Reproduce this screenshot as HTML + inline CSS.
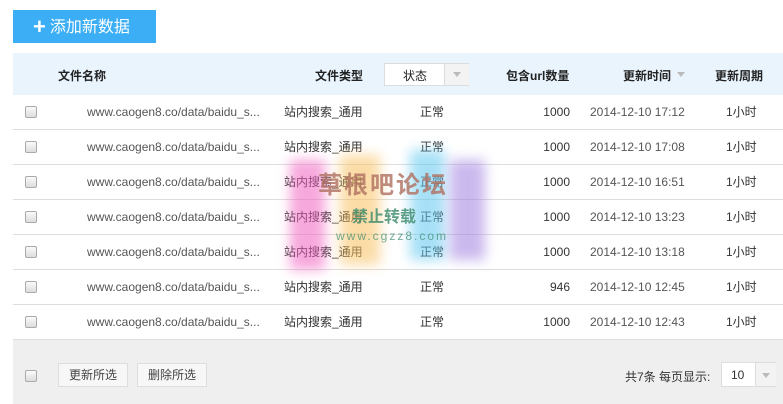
<!DOCTYPE html><html><head><meta charset="utf-8"><style>
*{margin:0;padding:0;box-sizing:border-box}
body{width:783px;height:404px;background:#fff;font-family:"Liberation Sans","Noto Sans CJK SC",sans-serif;font-size:12px;color:#333;position:relative;overflow:hidden}
.abs{position:absolute}
.btn{left:13px;top:10px;width:143px;height:33px;background:#3caef6;color:#fff;font-size:16px;line-height:33px;padding-left:20px}
.btn b{font-size:22px;font-weight:bold;vertical-align:-2px;margin-right:4px}
.hdr{left:13px;top:53px;width:770px;height:42px;background:#eaf4fd;font-weight:bold;font-size:12px;color:#222}
.hdr>span{position:absolute;top:14px}
.row{left:13px;width:770px;height:35px;border-bottom:1px solid #ddd;line-height:34px}
.row span{position:absolute;top:0}
.cb{width:12px;height:12px;border:1px solid #aaa;border-radius:2px;background:linear-gradient(#fafafa,#ddd);position:absolute}
.foot{left:13px;top:340px;width:770px;height:64px;background:#efefef}
.fb{position:absolute;top:23px;height:24px;border:1px solid #ddd;background:#f7f7f7;line-height:22px;text-align:center;color:#444}
.sel{position:absolute;background:#fff;border:1px solid #ddd}
.arr{position:absolute;width:0;height:0;border-left:4px solid transparent;border-right:4px solid transparent;border-top:5px solid #bbb}
.wm{position:absolute;filter:blur(6px);opacity:.55}
</style></head><body>
<div class="abs btn"><b>+</b>添加新数据</div>
<div class="abs hdr">
<span style="left:45px">文件名称</span>
<span style="left:302px">文件类型</span>
<div class="sel" style="left:371px;top:10px;width:85px;height:23px;font-weight:normal"><div style="position:absolute;left:18px;top:3px">状态</div><div style="position:absolute;left:59px;top:0;width:25px;height:21px;background:#f3f3f3;border-left:1px solid #ddd"></div><div class="arr" style="left:68px;top:8px"></div></div>
<span style="left:493px">包含url数量</span>
<span style="left:610px">更新时间</span><div class="arr" style="left:664px;top:19px"></div>
<span style="left:702px">更新周期</span>
</div>
<div id="rows"></div>
<script>
var d=[["17:12","1000"],["17:08","1000"],["16:51","1000"],["13:23","1000"],["13:18","1000"],["12:45","946"],["12:43","1000"]];
var h="";d.forEach(function(r,i){h+='<div class="abs row" style="top:'+(95+i*35)+'px"><div class="cb" style="left:12px;top:11px"></div><span style="left:74px;color:#555">www.caogen8.co/data/baidu_s...</span><span style="left:271px">站内搜索_通用</span><span style="left:407px">正常</span><span style="right:213px">'+r[1]+'</span><span style="left:577px;color:#555">2014-12-10 '+r[0]+'</span><span style="left:713px">1小时</span></div>'});
document.getElementById("rows").innerHTML=h;
</script>
<div class="wm" style="left:290px;top:160px;width:35px;height:110px;background:#f060c0"></div>
<div class="wm" style="left:340px;top:155px;width:40px;height:110px;background:#f8c060"></div>
<div class="wm" style="left:410px;top:150px;width:35px;height:110px;background:#60c8f0"></div>
<div class="wm" style="left:450px;top:160px;width:35px;height:100px;background:#a080e0"></div>
<div class="abs" style="left:318px;top:165px;font-size:24px;font-weight:bold;color:#b07060;opacity:.8;letter-spacing:2px">草根吧论坛</div>
<div class="abs" style="left:352px;top:203px;font-size:16px;font-weight:bold;color:#3a8a6a;opacity:.8">禁止转载</div>
<div class="abs" style="left:336px;top:229px;font-size:12px;color:#3a8a6a;opacity:.7;letter-spacing:2px">www.cgzz8.com</div>
<div class="abs foot">
<div class="cb" style="left:12px;top:30px"></div>
<div class="fb" style="left:45px;width:70px">更新所选</div>
<div class="fb" style="left:124px;width:70px">删除所选</div>
<div style="position:absolute;left:612px;top:28px;color:#333">共7条 每页显示:</div>
<div class="sel" style="left:708px;top:22px;width:55px;height:25px"><span style="position:absolute;left:9px;top:5px">10</span><div style="position:absolute;left:33px;top:0;width:21px;height:23px;background:#f3f3f3;border-left:1px solid #ddd"></div><div class="arr" style="left:40px;top:10px"></div></div>
</div>
</body></html>
